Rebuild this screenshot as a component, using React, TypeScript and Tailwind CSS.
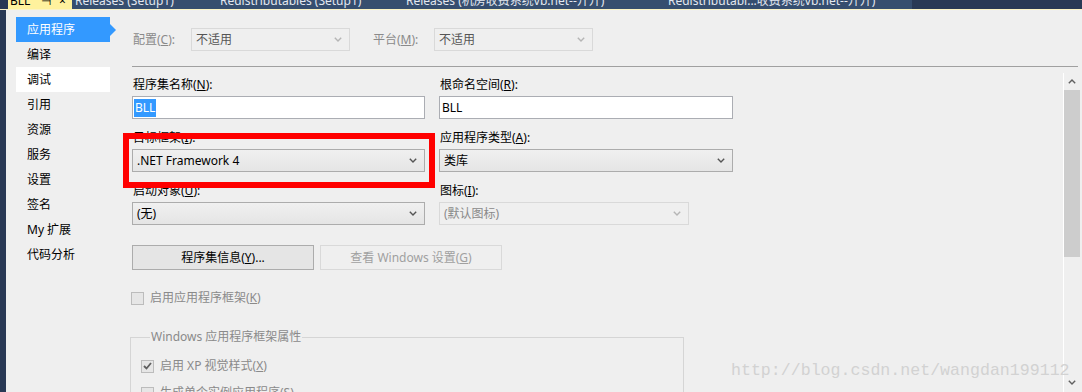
import type { ReactNode } from 'react';

const FONT = "font-['Noto_Sans','Noto_Sans_CJK_SC',sans-serif]";

function Chevron({ up = false, color = '#555' }: { up?: boolean; color?: string }) {
  return (
    <svg width="8" height="5" viewBox="0 0 8 5" className="shrink-0">
      <path
        d={up ? 'M0.8 4.2 L4 1 L7.2 4.2' : 'M0.8 0.8 L4 4 L7.2 0.8'}
        fill="none"
        stroke={color}
        strokeWidth="1.4"
      />
    </svg>
  );
}

function Select({
  value,
  disabled = false,
  className = '',
}: {
  value: string;
  disabled?: boolean;
  className?: string;
}) {
  return (
    <div
      className={`h-[23px] flex items-center justify-between pl-[4px] pr-[7px] border ${
        disabled
          ? 'border-[#d9d9d9] bg-[#efefef] text-[#8a8a8a]'
          : 'border-[#acacac] bg-gradient-to-b from-[#f0f0f0] to-[#e5e5e5] text-black'
      } ${className}`}
    >
      <span>{value}</span>
      <Chevron color={disabled ? '#b5b5b5' : '#555'} />
    </div>
  );
}

function Input({ children }: { children: ReactNode }) {
  return (
    <div className="h-[23px] flex items-center px-[1px] border border-[#abadb3] bg-white">{children}</div>
  );
}

function Label({ children, h = 'h-[30px]' }: { children: ReactNode; h?: string }) {
  return <div className={`${h} flex items-end pb-[3px] pl-[1px] leading-[16px]`}>{children}</div>;
}

function Check({ checked = false, children }: { checked?: boolean; children: ReactNode }) {
  return (
    <div className="h-[16px] flex items-center gap-[6px] text-[#8a8a8a]">
      <div className="w-[13px] h-[13px] border border-[#bcbcbc] bg-[#e6e6e6] flex items-center justify-center">
        {checked && (
          <svg width="9" height="8" viewBox="0 0 9 8">
            <path d="M1 4 L3.5 6.5 L8 1" fill="none" stroke="#606060" strokeWidth="1.8" />
          </svg>
        )}
      </div>
      <span>{children}</span>
    </div>
  );
}

const nav = ['应用程序', '编译', '调试', '引用', '资源', '服务', '设置', '签名', 'My 扩展', '代码分析'];

const tabs = [
  { label: 'Releases (Setup1)', w: 'w-[145px]' },
  { label: 'Redistributables (Setup1)', w: 'w-[186px]' },
  { label: 'Releases (机房收费系统vb.net--开开)', w: 'w-[262px]' },
  { label: 'Redistributabl...收费系统vb.net--开开)', w: 'w-[244px]' },
];

export default function App() {
  return (
    <div className={`relative w-[1082px] h-[392px] overflow-hidden bg-[#efefef] flex flex-col text-[12px] ${FONT}`}>
      {/* tab strip, cut at the top */}
      <div className="shrink-0 h-[9px] flex overflow-hidden bg-[#293955] text-[#e3e8f0] leading-[12px]">
        <div className="w-[8px] shrink-0" />
        <div className="w-[904px] shrink-0 flex bg-[#364e6f]">
          <div className="w-[64px] shrink-0 bg-[#fff29d] text-black flex pl-[2px] -mt-[5px] whitespace-nowrap">
            <span className="w-[31px]">BLL</span>
            <span className="w-[18px]">⊣</span>
            <span>×</span>
          </div>
          <div className="w-[3px] shrink-0" />
          {tabs.map((t) => (
            <span key={t.label} className={`${t.w} shrink-0 -mt-[5px] whitespace-nowrap overflow-hidden`}>
              {t.label}
            </span>
          ))}
        </div>
      </div>
      <div className="shrink-0 h-[1px] bg-[#fbf3c4]" />

      <div className="flex-1 min-h-0 flex">
        <div className="w-[6px] bg-[#293955]" />

        {/* side navigation */}
        <div className="w-[117px] pl-[10px] pt-[7px]">
          {nav.map((n, i) => (
            <div
              key={n}
              className={`relative w-[94px] h-[25px] pl-[11px] leading-[25px] ${
                i === 0 ? 'bg-[#3399ff] text-white' : i === 2 ? 'bg-white text-black' : 'text-black'
              }`}
            >
              {n}
              {i === 0 && (
                <div className="absolute right-[-6px] top-[7px] w-0 h-0 border-y-[6px] border-y-transparent border-l-[6px] border-l-[#3399ff]" />
              )}
            </div>
          ))}
        </div>

        {/* main page */}
        <div className="flex-1 flex flex-col">
          <div className="pt-[18px] pl-[10px] flex items-center text-[#8a8a8a]">
            <div className="w-[58px]">
              配置(<u>C</u>):
            </div>
            <Select value="不适用" disabled className="w-[159px] text-[#555]" />
            <div className="w-[61px] ml-[23px]">
              平台(<u>M</u>):
            </div>
            <Select value="不适用" disabled className="w-[159px] text-[#555]" />
          </div>
          <div className="mt-[15px] ml-[9px] mr-[4px] h-[1px] bg-[#a0a0a0]" />

          <div className="flex-1 min-h-0 flex">
            <div className="flex-1 pl-[9px] text-black">
              <div className="flex gap-[14px]">
                <div className="w-[293px]">
                  <Label h="h-[29px]">
                    程序集名称(<u>N</u>):
                  </Label>
                  <Input>
                    <span className="bg-[#3399ff] text-white px-[1px]">BLL</span>
                  </Input>
                  <Label>
                    目标框架(<u>I</u>):
                  </Label>
                  <Select value=".NET Framework 4" />
                  <Label>
                    启动对象(<u>U</u>):
                  </Label>
                  <Select value="(无)" />
                </div>
                <div className="w-[294px]">
                  <Label h="h-[29px]">
                    根命名空间(<u>R</u>):
                  </Label>
                  <Input>
                    <span className="px-[1px]">BLL</span>
                  </Input>
                  <Label>
                    应用程序类型(<u>A</u>):
                  </Label>
                  <Select value="类库" />
                  <Label>
                    图标(<u>I</u>):
                  </Label>
                  <Select value="(默认图标)" disabled className="w-[250px]" />
                </div>
              </div>

              <div className="mt-[20px] flex gap-[6px]">
                <button className="w-[182px] h-[25px] border border-[#acacac] bg-[#e5e5e5] text-black">
                  程序集信息(<u>Y</u>)...
                </button>
                <button className="w-[182px] h-[25px] border border-[#d9d9d9] bg-[#efefef] text-[#a0a0a0]">
                  查看 Windows 设置(<u>G</u>)
                </button>
              </div>

              <div className="mt-[20px] -ml-[1px]">
                <Check>
                  启用应用程序框架(<u>K</u>)
                </Check>
              </div>

              <fieldset className="mt-[23px] -ml-[2px] w-[554px] border border-[#d5d5d5] pl-[10px] pb-[20px]">
                <legend className="ml-[9px] px-[1px] leading-[16px] text-[#8a8a8a]">Windows 应用程序框架属性</legend>
                <div className="mt-[13px]">
                  <Check checked>
                    启用 XP 视觉样式(<u>X</u>)
                  </Check>
                </div>
                <div className="mt-[11px]">
                  <Check>
                    生成单个实例应用程序(<u>S</u>)
                  </Check>
                </div>
              </fieldset>
            </div>

            {/* scrollbar */}
            <div className="mt-[6px] mr-[2px] w-[17px] border-l border-white flex flex-col">
              <div className="h-[17px] shrink-0 flex items-center justify-center">
                <Chevron up color="#606060" />
              </div>
              <div className="h-[167px] shrink-0 bg-[#cdcdcd]" />
              <div className="flex-1" />
              <div className="h-[12px] shrink-0 flex items-start justify-center">
                <Chevron color="#606060" />
              </div>
            </div>
          </div>
        </div>
      </div>

      {/* annotation */}
      <div className="absolute left-[123px] top-[133px] w-[312px] h-[55px] border-[6px] border-[#ff0000]" />

      {/* watermark */}
      <div className="absolute left-[731px] top-[361px] font-['Liberation_Mono',monospace] text-[16.6px] leading-[20px] text-[#d2d2d2]">
        http://blog.csdn.net/wangdan199112
      </div>
    </div>
  );
}
